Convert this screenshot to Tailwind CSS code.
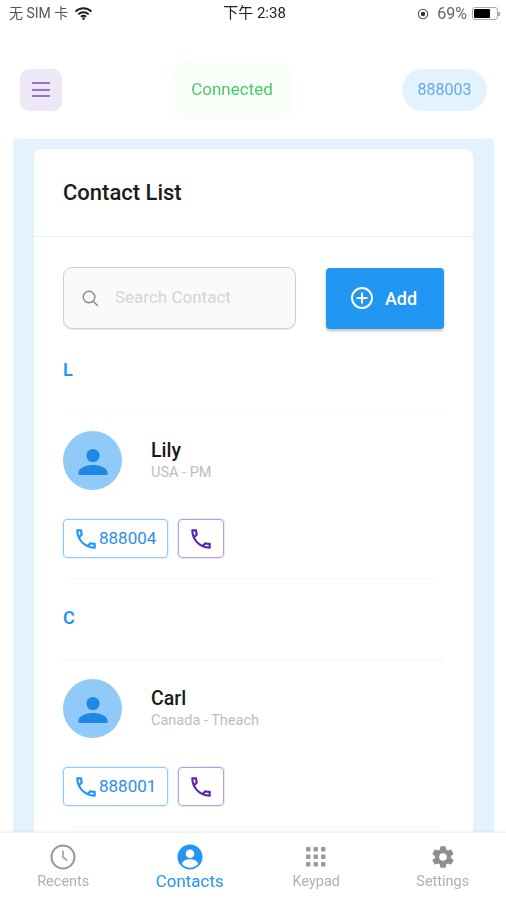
<!DOCTYPE html>
<html lang="zh">
<head>
  <meta charset="UTF-8" />
  <meta name="viewport" content="width=device-width, initial-scale=1.0" />
  <title>Contacts</title>
  <script src="https://cdn.jsdelivr.net/npm/@tailwindcss/browser@4"></script>
</head>
<body class="bg-white text-[#1a1a1a] font-['Roboto','Noto_Sans_CJK_SC',sans-serif]">
<div class="w-[506px] h-[900px] flex flex-col overflow-hidden blur-[0.6px]">

  <!-- Status bar -->
  <div class="h-[27px] shrink-0 pl-[9px] pr-[6px] flex items-center justify-between text-[14px] text-[#333]">
    <div class="w-[150px] flex items-center gap-[6px] text-[#555]">
      <span>无 SIM 卡</span>
      <svg width="19" height="13" viewBox="0 0 18 13"><path d="M1 4.600a11.400 11.400 0 0 1 16 0M3.800 7.400a7.400 7.400 0 0 1 10.400 0M6.400 9.800a3.600 3.600 0 0 1 5.200 0" fill="none" stroke="#222" stroke-width="1.900"/><circle cx="9" cy="11.600" r="1.300" fill="#222"/></svg>
    </div>
    <span class="text-[15px] text-[#222]">下午 2:38</span>
    <div class="w-[150px] flex items-center justify-end text-[#666]">
      <svg class="mr-[8px]" width="12" height="12" viewBox="0 0 12 12"><circle cx="6" cy="6" r="4.700" fill="none" stroke="#555" stroke-width="1.100"/><circle cx="6" cy="6" r="2.200" fill="#333"/></svg>
      <span class="text-[16px] mr-[5px]">69%</span>
      <div class="flex items-center">
        <div class="w-[26px] h-[13px] rounded-[3px] border border-[#aaa] p-[1px]"><div class="w-[16px] h-full bg-black rounded-[1px]"></div></div>
        <div class="w-[2px] h-[4px] bg-[#aaa]"></div>
      </div>
    </div>
  </div>

  <!-- Header -->
  <div class="h-[112px] shrink-0 pt-[13px] pl-[20px] pr-[19px] flex items-center justify-between">
    <button class="w-[42px] h-[42px] rounded-[9px] bg-[#ede7f6] flex flex-col items-center justify-center gap-[4.500px]">
      <span class="w-[18px] h-[2px] bg-[#9575cd]"></span>
      <span class="w-[18px] h-[2px] bg-[#9575cd]"></span>
      <span class="w-[18px] h-[2px] bg-[#9575cd]"></span>
    </button>
    <div class="w-[119px] h-[58px] rounded-[12px] bg-[#f9fef9] flex items-center justify-center text-[17px] text-[#4cc868]">Connected</div>
    <div class="w-[85px] h-[42px] rounded-full bg-[#e3f2fd] flex items-center justify-center text-[16px] text-[#64a9f0]">888003</div>
  </div>

  <!-- Content -->
  <div class="flex-1 min-h-0 ml-[13px] mr-[12px] bg-[#e3f2fd] px-[21px] pt-[10px] overflow-hidden">
    <div class="bg-white rounded-t-[8px] h-full">
      <div class="h-[88px] px-[29px] flex items-center border-b border-[#eeeeee]">
        <h1 class="text-[22px] font-medium text-[#1c1c1c]">Contact List</h1>
      </div>

      <div class="px-[29px] pt-[30px]">
        <!-- Search + Add -->
        <div class="flex gap-[30px] items-center">
          <div class="w-[233px] h-[62px] rounded-[9px] border border-[#cfcfcf] bg-[#fafafa] flex items-center pl-[17px] gap-[15px] text-[17px] text-[#d4d4d4] shadow-[0_1px_1px_rgba(0,0,0,0.08)]">
            <svg width="19" height="19" viewBox="0 0 19 19"><circle cx="8" cy="8" r="5.800" fill="none" stroke="#888" stroke-width="1.400"/><path d="M12.400 12.400 17 17" stroke="#888" stroke-width="1.400"/></svg>
            <span>Search Contact</span>
          </div>
          <button class="w-[118px] h-[61px] rounded-[4px] bg-[#2196f3] text-white text-[18px] font-medium flex items-center justify-center gap-[11px] pr-[3px] shadow-[0_2px_3px_rgba(0,0,0,0.25)]">
            <svg width="24" height="24" viewBox="0 0 24 24"><circle cx="12" cy="12" r="10" fill="none" stroke="#fff" stroke-width="2"/><path d="M12 6.500v11M6.500 12h11" stroke="#fff" stroke-width="2"/></svg>
            <span>Add</span>
          </button>
        </div>

        <!-- L -->
        <div class="mt-[29px] h-[22px] flex items-center text-[#2196f3] text-[18px] font-semibold">L</div>
        <div class="mt-[30px] h-px bg-[#f9f9f9]"></div>
        <div class="mt-[20px] flex items-center">
          <div class="w-[59px] h-[59px] rounded-full bg-[#90caf9] flex items-center justify-center">
            <svg width="32" height="32" viewBox="0 0 32 32" fill="#1e88e5"><circle cx="16" cy="10.500" r="6.600"/><path d="M1.500 30v-2.500c0-4.800 8.600-7.400 14.500-7.400s14.500 2.600 14.500 7.400v2.500z"/></svg>
          </div>
          <div class="ml-[29px]">
            <div class="text-[19.500px] leading-[21px] font-medium text-[#1a1a1a] mb-[3px]">Lily</div>
            <div class="text-[14.500px] leading-[18px] text-[#bdbdbd]">USA - PM</div>
          </div>
        </div>
        <div class="mt-[29px] flex gap-[10px]">
          <button class="w-[105px] h-[39px] rounded-[4px] border border-[#90caf9] shadow-[0_0_1px_1px_#e3f2fd] flex items-center pl-[9px] text-[17px] text-[#2b8fe8]">
            <svg width="26" height="26" viewBox="0 0 24 24" fill="#2196f3"><path d="M6.540 5c.06.89.21 1.760.45 2.590l-1.200 1.200c-.41-1.200-.67-2.470-.76-3.790h1.510m9.860 12.020c.85.24 1.720.39 2.600.45v1.490c-1.320-.09-2.590-.35-3.800-.75l1.200-1.190M7.500 3H4c-.55 0-1 .45-1 1 0 9.390 7.610 17 17 17 .55 0 1-.45 1-1v-3.490c0-.55-.45-1-1-1-1.240 0-2.450-.2-3.570-.57-.1-.04-.21-.05-.31-.05-.26 0-.51.1-.71.29l-2.200 2.200c-2.830-1.450-5.150-3.760-6.590-6.590l2.200-2.200c.28-.28.36-.67.25-1.020C8.700 6.450 8.500 5.250 8.500 4c0-.55-.45-1-1-1z"/></svg>
            <span>888004</span>
          </button>
          <button class="w-[46px] h-[39px] rounded-[4px] border border-[#b39ddb] shadow-[0_0_1px_1px_#ede7f6] flex items-center justify-center">
            <svg width="26" height="26" viewBox="0 0 24 24" fill="#5e25b0"><path d="M6.540 5c.06.89.21 1.760.45 2.590l-1.200 1.200c-.41-1.200-.67-2.470-.76-3.790h1.510m9.860 12.020c.85.24 1.720.39 2.600.45v1.490c-1.320-.09-2.590-.35-3.800-.75l1.200-1.190M7.500 3H4c-.55 0-1 .45-1 1 0 9.390 7.610 17 17 17 .55 0 1-.45 1-1v-3.490c0-.55-.45-1-1-1-1.240 0-2.450-.2-3.570-.57-.1-.04-.21-.05-.31-.05-.26 0-.51.1-.71.29l-2.200 2.200c-2.830-1.450-5.150-3.760-6.590-6.590l2.200-2.200c.28-.28.36-.67.25-1.020C8.700 6.450 8.500 5.250 8.500 4c0-.55-.45-1-1-1z"/></svg>
          </button>
        </div>
        <div class="mt-[20px] mx-[7px] h-px bg-[#f6f6f6]"></div>

        <!-- C -->
        <div class="mt-[27px] h-[22px] flex items-center text-[#2196f3] text-[18px] font-semibold">C</div>
        <div class="mt-[32px] h-px bg-[#f3f3f3]"></div>
        <div class="mt-[18px] flex items-center">
          <div class="w-[59px] h-[59px] rounded-full bg-[#90caf9] flex items-center justify-center">
            <svg width="32" height="32" viewBox="0 0 32 32" fill="#1e88e5"><circle cx="16" cy="10.500" r="6.600"/><path d="M1.500 30v-2.500c0-4.800 8.600-7.400 14.500-7.400s14.500 2.600 14.500 7.400v2.500z"/></svg>
          </div>
          <div class="ml-[29px]">
            <div class="text-[19.500px] leading-[21px] font-medium text-[#1a1a1a] mb-[3px]">Carl</div>
            <div class="text-[14.500px] leading-[18px] text-[#bdbdbd]">Canada - Theach</div>
          </div>
        </div>
        <div class="mt-[29px] flex gap-[10px]">
          <button class="w-[105px] h-[39px] rounded-[4px] border border-[#90caf9] shadow-[0_0_1px_1px_#e3f2fd] flex items-center pl-[9px] text-[17px] text-[#2b8fe8]">
            <svg width="26" height="26" viewBox="0 0 24 24" fill="#2196f3"><path d="M6.540 5c.06.89.21 1.760.45 2.590l-1.200 1.200c-.41-1.200-.67-2.470-.76-3.790h1.510m9.860 12.020c.85.24 1.720.39 2.600.45v1.490c-1.320-.09-2.590-.35-3.800-.75l1.200-1.190M7.500 3H4c-.55 0-1 .45-1 1 0 9.390 7.610 17 17 17 .55 0 1-.45 1-1v-3.490c0-.55-.45-1-1-1-1.240 0-2.450-.2-3.570-.57-.1-.04-.21-.05-.31-.05-.26 0-.51.1-.71.29l-2.200 2.200c-2.830-1.450-5.150-3.760-6.590-6.590l2.200-2.200c.28-.28.36-.67.25-1.020C8.700 6.450 8.500 5.250 8.500 4c0-.55-.45-1-1-1z"/></svg>
            <span>888001</span>
          </button>
          <button class="w-[46px] h-[39px] rounded-[4px] border border-[#b39ddb] shadow-[0_0_1px_1px_#ede7f6] flex items-center justify-center">
            <svg width="26" height="26" viewBox="0 0 24 24" fill="#5e25b0"><path d="M6.540 5c.06.89.21 1.760.45 2.590l-1.200 1.200c-.41-1.200-.67-2.470-.76-3.790h1.510m9.860 12.020c.85.24 1.720.39 2.600.45v1.490c-1.320-.09-2.590-.35-3.800-.75l1.200-1.190M7.500 3H4c-.55 0-1 .45-1 1 0 9.390 7.610 17 17 17 .55 0 1-.45 1-1v-3.490c0-.55-.45-1-1-1-1.240 0-2.450-.2-3.570-.57-.1-.04-.21-.05-.31-.05-.26 0-.51.1-.71.29l-2.200 2.200c-2.830-1.450-5.150-3.760-6.590-6.590l2.200-2.200c.28-.28.36-.67.25-1.020C8.700 6.450 8.500 5.250 8.500 4c0-.55-.45-1-1-1z"/></svg>
          </button>
        </div>
        <div class="mt-[20px] mx-[7px] h-px bg-[#f3f3f3]"></div>
      </div>
    </div>
  </div>

  <!-- Bottom nav -->
  <nav class="h-[68px] shrink-0 bg-white grid grid-cols-4 text-[14.500px] text-[#b0b0b0] border-t border-[#f2f2f2] pt-[11px] shadow-[0_-1px_3px_rgba(0,0,0,0.05)]">
    <div class="flex flex-col items-center gap-[1px]">
      <svg width="26" height="26" viewBox="0 0 26 26"><circle cx="13" cy="13" r="11.500" fill="none" stroke="#999" stroke-width="2"/><path d="M13 6.500V13l4 3.500" fill="none" stroke="#aaa" stroke-width="1.800"/></svg>
      <span>Recents</span>
    </div>
    <div class="flex flex-col items-center gap-[1px] text-[17px] leading-[20px] text-[#2196f3]">
      <svg width="26" height="26" viewBox="0 0 26 26"><circle cx="13" cy="13" r="12.500" fill="#2196f3"/><circle cx="13" cy="9.800" r="4.300" fill="#fff"/><path d="M4.800 20c1-3.400 4.800-4.700 8.200-4.700s7.200 1.300 8.200 4.700a11 11 0 0 1-16.400 0z" fill="#fff"/></svg>
      <span>Contacts</span>
    </div>
    <div class="flex flex-col items-center gap-[1px]">
      <svg width="26" height="26" viewBox="0 0 26 26" fill="#999"><rect x="3" y="3" width="4.500" height="4.500" rx="1"/><rect x="10.500" y="3" width="4.500" height="4.500" rx="1"/><rect x="18" y="3" width="4.500" height="4.500" rx="1"/><rect x="3" y="10.500" width="4.500" height="4.500" rx="1"/><rect x="10.500" y="10.500" width="4.500" height="4.500" rx="1"/><rect x="18" y="10.500" width="4.500" height="4.500" rx="1"/><rect x="3" y="18" width="4.500" height="4.500" rx="1"/><rect x="10.500" y="18" width="4.500" height="4.500" rx="1"/><rect x="18" y="18" width="4.500" height="4.500" rx="1"/></svg>
      <span>Keypad</span>
    </div>
    <div class="flex flex-col items-center gap-[1px]">
      <svg width="26" height="26" viewBox="0 0 24 24" fill="#8f8f8f"><path fill-rule="evenodd" d="M19.400 13c.04-.33.07-.66.07-1s-.03-.67-.07-1l2.100-1.650c.2-.15.25-.42.12-.64l-2-3.460c-.12-.22-.39-.3-.61-.22l-2.490 1c-.52-.4-1.080-.73-1.690-.98l-.38-2.650A.49.49 0 0 0 14 2h-4c-.25 0-.46.18-.49.42l-.38 2.650c-.61.25-1.170.59-1.690.98l-2.490-1c-.23-.09-.49 0-.61.22l-2 3.460c-.13.22-.07.49.12.640L4.570 11c-.04.33-.07.67-.07 1s.03.67.07 1l-2.110 1.650c-.19.15-.24.42-.12.64l2 3.460c.12.22.39.3.61.22l2.490-1c.52.4 1.080.73 1.690.98l.38 2.650c.03.24.24.42.49.42h4c.25 0 .46-.18.49-.42l.38-2.650c.61-.25 1.170-.59 1.690-.98l2.490 1c.23.09.49 0 .61-.22l2-3.460c.12-.22.07-.49-.12-.64L19.400 13zM12 15.500a3.500 3.500 0 1 1 0-7 3.500 3.500 0 0 1 0 7z"/></svg>
      <span>Settings</span>
    </div>
  </nav>
</div>
</body>
</html>
